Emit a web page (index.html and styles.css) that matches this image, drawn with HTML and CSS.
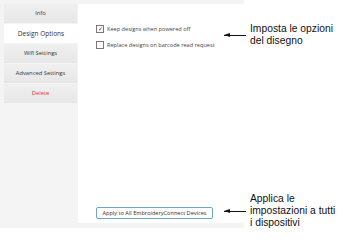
FILE: index.html
```html
<!DOCTYPE html>
<html>
<head>
    <title>Design Options</title>
    <link rel="stylesheet" href="styles.css">
</head>
<body>
    <div class="app">
        <div class="tabs">
            <div class="tab">Info</div>
            <div class="tab active">Design Options</div>
            <div class="tab">Wifi Settings</div>
            <div class="tab">Advanced Settings</div>
            <div class="tab delete">Delete</div>
        </div>
        <div class="panel">
            <label class="opt"><span class="box checked">&#10003;</span>Keep designs when powered off</label>
            <label class="opt"><span class="box"></span>Replace designs on barcode read request</label>
            <div class="spacer"></div>
            <button class="apply">Apply to All EmbroideryConnect Devices</button>
        </div>
    </div>

    <!-- callouts -->
    <div class="note note-top">
        <span class="arrow"></span>
        <p>Imposta le opzioni<br>del disegno</p>
    </div>
    <div class="note note-bottom">
        <span class="arrow"></span>
        <p>Applica le<br>impostazioni a tutti<br>i dispositivi</p>
    </div>
</body>
</html>
```
FILE: styles.css
```css
body {
    margin: 0;
    background-color: #fff;
    font-family: "Open Sans", "Noto Sans", sans-serif;
    position: relative;
    width: 347px;
    height: 245px;
    overflow: hidden;
}
.app {
    display: flex;
    width: 244px;
    height: 228px;
    box-sizing: border-box;
    padding: 4px 0 5px 4px;
    background-color: #f4f4f4;
}
.tabs {
    width: 73px;
    display: flex;
    flex-direction: column;
    gap: 1px;
}
.tab {
    height: 19px;
    line-height: 19px;
    text-align: center;
    font-size: 5.8px;
    color: #333;
    background: linear-gradient(#f0f0f0, #e6e6e6);
}
.tab.active {
    background: #fff;
    margin-right: -1px;
    font-size: 6.5px;
}
.tab.delete {
    color: #e0303a;
}
.panel {
    flex: 1;
    margin-left: 1px;
    background-color: #fff;
    display: flex;
    flex-direction: column;
    padding: 21px 0 4px 18px;
}
.opt {
    display: flex;
    align-items: center;
    font-size: 5.6px;
    color: #444;
    height: 8px;
    margin-bottom: 8px;
}
.box {
    width: 6px;
    height: 6px;
    border: 1px solid #777;
    margin-right: 3px;
    font-size: 6px;
    line-height: 6px;
    text-align: center;
    color: #333;
}
.spacer {
    flex: 1;
}
.apply {
    align-self: flex-start;
    width: 117px;
    height: 12px;
    padding: 0;
    font-family: inherit;
    font-size: 5.6px;
    color: #333;
    background: #fdfdfd;
    border: 1px solid #6ea2d0;
    border-radius: 2px;
}
.note {
    position: absolute;
    left: 224px;
    display: flex;
    align-items: center;
    font-family: "Liberation Sans", Arial, sans-serif;
    font-size: 10.3px;
    line-height: 12px;
    color: #111;
}
.note p {
    margin: 0 0 0 4px;
}
.note-top {
    top: 23px;
}
.note-bottom {
    top: 193px;
}
.arrow {
    position: relative;
    width: 22px;
    height: 1px;
    background: #111;
}
.arrow::before {
    content: "";
    position: absolute;
    left: 0;
    top: -2px;
    border-right: 6px solid #111;
    border-top: 2.5px solid transparent;
    border-bottom: 2.5px solid transparent;
}
```
